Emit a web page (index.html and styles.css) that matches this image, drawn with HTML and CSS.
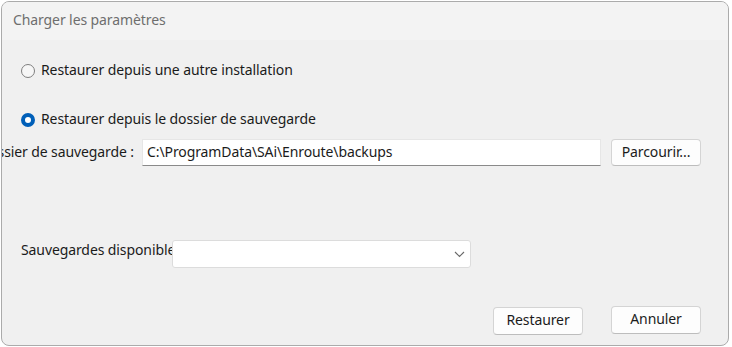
FILE: index.html
```html
<!DOCTYPE html>
<html lang="fr">
<head>
    <meta charset="UTF-8">
    <meta name="viewport" content="width=device-width, initial-scale=1.0">
    <title>Charger les paramètres</title>
    <link rel="stylesheet" href="styles.css">
</head>
<body>
    <div class="dialog">
        <div class="titlebar">Charger les paramètres</div>
        <div class="content">
            <label class="radio-row first">
                <span class="radio"></span>
                <span class="radio-text">Restaurer depuis une autre installation</span>
            </label>
            <label class="radio-row second">
                <span class="radio checked"></span>
                <span class="radio-text">Restaurer depuis le dossier de sauvegarde</span>
            </label>
            <div class="folder-row">
                <div class="folder-label"><span>Dossier de sauvegarde :</span></div>
                <div class="textbox">C:\ProgramData\SAi\Enroute\backups</div>
                <button class="btn">Parcourir...</button>
            </div>
            <div class="backup-row">
                <div class="backup-label">Sauvegardes disponibles :</div>
                <div class="combo">
                    <svg width="11" height="7" viewBox="0 0 11 7"><path d="M1 1 L5.5 5.5 L10 1" fill="none" stroke="#6a6a6a" stroke-width="1.1"/></svg>
                </div>
            </div>
            <div class="actions">
                <button class="btn restore">Restaurer</button>
                <button class="btn">Annuler</button>
            </div>
        </div>
    </div>
</body>
</html>
```

FILE: styles.css
```css
body {
    margin: 0;
    background-color: #ffffff;
    font-family: "Noto Sans", "Open Sans", sans-serif;
    font-size: 14px;
    letter-spacing: -0.1px;
    color: #1b1b1b;
}
.dialog {
    margin: 1px 0 0 1px;
    width: 728px;
    height: 345px;
    box-sizing: border-box;
    border: 1px solid #ababab;
    border-radius: 8px;
    background-color: #f0f0f0;
    overflow: hidden;
}
.titlebar {
    height: 38px;
    line-height: 36px;
    padding-left: 11px;
    background-color: #f3f3f3;
    color: #6e6e6e;
}
.content {
    display: flex;
    flex-direction: column;
}
.radio-row {
    display: flex;
    align-items: center;
    gap: 6px;
    height: 20px;
    padding-left: 19px;
}
.radio-row.first {
    margin-top: 21px;
}
.radio-row.second {
    margin-top: 29px;
}
.radio-text {
    margin-bottom: 3px;
}
.radio {
    width: 14px;
    height: 14px;
    box-sizing: border-box;
    border: 1px solid #7f7f7f;
    border-radius: 50%;
    background-color: #f6f6f6;
}
.radio.checked {
    border: 4px solid #005fb8;
    background-color: #ffffff;
}
.folder-row {
    display: flex;
    align-items: center;
    height: 27px;
    margin-top: 9px;
}
.folder-label {
    width: 132px;
    display: flex;
    justify-content: flex-end;
    white-space: nowrap;
    overflow: hidden;
    padding-bottom: 3px;
}
.textbox {
    margin-left: 8px;
    width: 459px;
    height: 27px;
    box-sizing: border-box;
    padding: 0 4px;
    line-height: 23px;
    background-color: #ffffff;
    border: 1px solid #e6e6e6;
    border-bottom-color: #8a8a8a;
    white-space: nowrap;
}
.btn {
    font: inherit;
    color: inherit;
    letter-spacing: inherit;
    width: 90px;
    height: 27px;
    padding: 0 0 3px;
    background-color: #fdfdfd;
    border: 1px solid #d4d4d4;
    border-bottom-color: #bdbdbd;
    border-radius: 4px;
}
.folder-row .btn {
    margin-left: 10px;
}
.backup-row {
    display: flex;
    align-items: center;
    height: 28px;
    margin-top: 74px;
    padding-left: 19px;
}
.backup-label {
    width: 151px;
    white-space: nowrap;
    overflow: hidden;
    margin-bottom: 10px;
}
.combo {
    width: 299px;
    height: 28px;
    box-sizing: border-box;
    background-color: #ffffff;
    border: 1px solid #dcdcdc;
    border-radius: 3px;
    display: flex;
    align-items: center;
    justify-content: flex-end;
    padding-right: 5px;
}
.actions {
    display: flex;
    align-items: flex-start;
    gap: 28px;
    margin-top: 38px;
    padding-left: 491px;
}
.actions .btn {
    height: 28px;
}
.actions .restore {
    margin-top: 1px;
}
```
